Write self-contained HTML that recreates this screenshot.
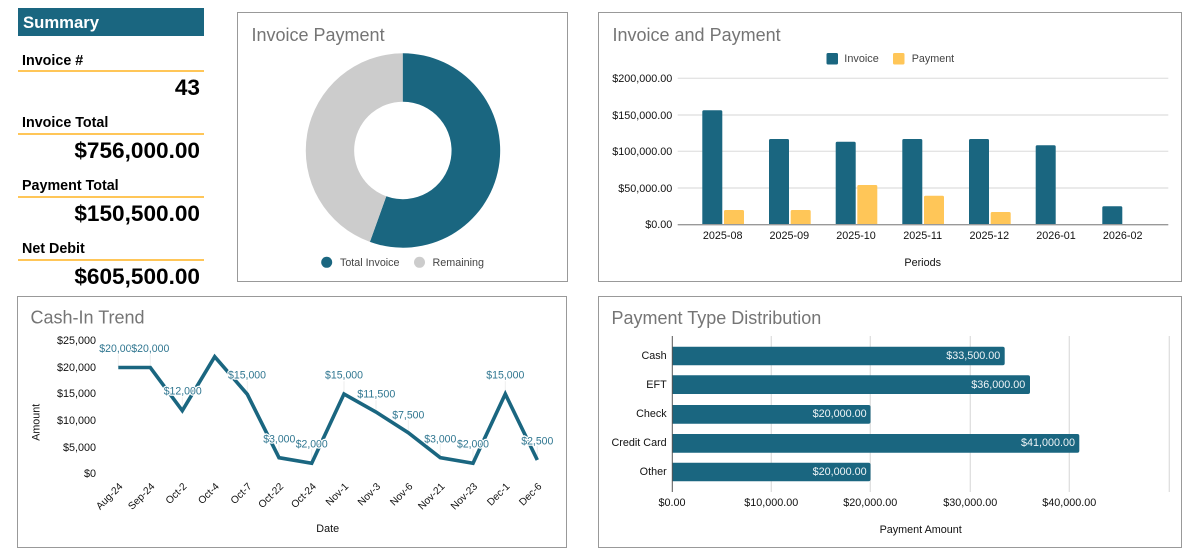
<!DOCTYPE html>
<html><head><meta charset="utf-8"><title>Dashboard</title>
<style>
html,body{margin:0;padding:0;background:#fff;width:1186px;height:551px;overflow:hidden;position:relative}
body,svg{font-family:"Liberation Sans",Arial,sans-serif}
svg{display:block;position:absolute;left:0;top:0}
.t{font-size:18px;fill:#757575}
.s{font-size:10.2px;fill:#111}
.e{text-anchor:end}
.m{text-anchor:middle}
.g{font-size:11px;fill:#444}
.d{font-size:11px;fill:#2f7690;text-anchor:middle;stroke:#fff;stroke-width:2.5px;paint-order:stroke;stroke-linejoin:round}
.card{fill:#fff;stroke:#999;stroke-width:1}
.x{position:absolute;white-space:nowrap;font-size:10.8px;line-height:12px;height:12px;color:#111}
.r{width:200px;text-align:right}
.c{width:200px;text-align:center}
.w{color:#eef4f6;width:200px;text-align:right}
.lb{position:absolute;white-space:nowrap;font-size:14.3px;line-height:16px;font-weight:700;color:#000;left:22px}
.v{position:absolute;white-space:nowrap;font-size:22.6px;line-height:26px;font-weight:700;color:#000;width:190px;left:10px;text-align:right}
.sum{position:absolute;white-space:nowrap;font-size:16.7px;line-height:20px;font-weight:700;color:#fff;left:23px;top:13px}
</style></head><body>
<svg width="1186" height="551" viewBox="0 0 1186 551" xmlns="http://www.w3.org/2000/svg">
<rect x="18" y="8" width="186" height="28" fill="#1a6680"/>
<rect x="18" y="70" width="186" height="2" fill="#ffc658"/>
<rect x="18" y="133" width="186" height="2" fill="#ffc658"/>
<rect x="18" y="196" width="186" height="2" fill="#ffc658"/>
<rect x="18" y="259" width="186" height="2" fill="#ffc658"/>

<!-- Invoice Payment donut -->
<rect class="card" x="237.5" y="12.5" width="330" height="269"/>
<text class="t" x="251.5" y="41">Invoice Payment</text>
<path d="M402.7 53.3A97.2 97.2 0 1 1 369.9 241.9L386.3 196.3A48.7 48.7 0 1 0 402.7 101.8Z" fill="#1a6680"/>
<path d="M402.7 53.3A97.2 97.2 0 0 0 369.9 241.9L386.3 196.3A48.7 48.7 0 0 1 402.7 101.8Z" fill="#cccccc"/>
<circle cx="326.7" cy="262.3" r="5.5" fill="#1a6680"/>
<text class="g" x="340" y="266" textLength="59.5" lengthAdjust="spacingAndGlyphs">Total Invoice</text>
<circle cx="419.5" cy="262.3" r="5.5" fill="#cccccc"/>
<text class="g" x="432.5" y="266" textLength="51.5" lengthAdjust="spacingAndGlyphs">Remaining</text>

<!-- Invoice and Payment -->
<rect class="card" x="598.5" y="12.5" width="583" height="269"/>
<text class="t" x="612.5" y="41">Invoice and Payment</text>
<rect x="826.5" y="53" width="11.5" height="11.5" rx="1.5" fill="#1a6680"/>
<text class="g" x="844.3" y="62" textLength="34.5" lengthAdjust="spacingAndGlyphs">Invoice</text>
<rect x="893" y="53" width="11.5" height="11.5" rx="1.5" fill="#ffc658"/>
<text class="g" x="911.7" y="62" textLength="42.5" lengthAdjust="spacingAndGlyphs">Payment</text>
<g stroke="#e4e4e4" stroke-width="1.4">
<line x1="677.7" x2="1168.3" y1="78.3" y2="78.3"/>
<line x1="677.7" x2="1168.3" y1="115" y2="115"/>
<line x1="677.7" x2="1168.3" y1="151.3" y2="151.3"/>
<line x1="677.7" x2="1168.3" y1="188" y2="188"/>
</g>
<g fill="#1a6680">
<path d="M702.3 224.5V111.8q0-1.5 1.5-1.5h17q1.5 0 1.5 1.5V224.5Z"/>
<path d="M769 224.5V140.5q0-1.5 1.5-1.5h17q1.5 0 1.5 1.5V224.5Z"/>
<path d="M835.7 224.5V143.2q0-1.5 1.5-1.5h17q1.5 0 1.5 1.5V224.5Z"/>
<path d="M902.3 224.5V140.5q0-1.5 1.5-1.5h17q1.5 0 1.5 1.5V224.5Z"/>
<path d="M969 224.5V140.5q0-1.5 1.5-1.5h17q1.5 0 1.5 1.5V224.5Z"/>
<path d="M1035.7 224.5V146.8q0-1.5 1.5-1.5h17q1.5 0 1.5 1.5V224.5Z"/>
<path d="M1102.3 224.5V207.8q0-1.5 1.5-1.5h17q1.5 0 1.5 1.5V224.5Z"/>
</g>
<g fill="#ffc658">
<path d="M724 224.5V211.5q0-1.5 1.5-1.5h17q1.5 0 1.5 1.5V224.5Z"/>
<path d="M790.7 224.5V211.5q0-1.5 1.5-1.5h17q1.5 0 1.5 1.5V224.5Z"/>
<path d="M857.3 224.5V186.5q0-1.5 1.5-1.5h17q1.5 0 1.5 1.5V224.5Z"/>
<path d="M924 224.5V197.2q0-1.5 1.5-1.5h17q1.5 0 1.5 1.5V224.5Z"/>
<path d="M990.7 224.5V213.5q0-1.5 1.5-1.5h17q1.5 0 1.5 1.5V224.5Z"/>
</g>
<line x1="677.7" x2="1168.3" y1="224.7" y2="224.7" stroke="#999" stroke-width="1.4"/>

<!-- Cash-In Trend -->
<rect class="card" x="17.5" y="296.5" width="549" height="251"/>
<text class="t" x="30.5" y="323.5">Cash-In Trend</text>
<text class="s m" style="font-size:11px" transform="translate(39.5 422.3) rotate(-90)" textLength="37" lengthAdjust="spacingAndGlyphs">Amount</text>
<g stroke="#eeeeee" stroke-width="1">
<line x1="118.3" x2="118.3" y1="354" y2="367"/><line x1="150.3" x2="150.3" y1="354" y2="367"/>
<line x1="182.3" x2="182.3" y1="396" y2="410"/><line x1="247.3" x2="247.3" y1="380" y2="394"/>
<line x1="279" x2="279" y1="444" y2="457"/><line x1="311.7" x2="311.7" y1="449" y2="463"/>
<line x1="344" x2="344" y1="380" y2="394"/><line x1="376" x2="376" y1="399" y2="412"/>
<line x1="408.3" x2="408.3" y1="420" y2="432"/><line x1="440.3" x2="440.3" y1="444" y2="457"/>
<line x1="473" x2="473" y1="449" y2="463"/><line x1="505.3" x2="505.3" y1="380" y2="394"/>
<line x1="537.3" x2="537.3" y1="446" y2="460"/>
</g>
<polyline fill="none" stroke="#1a6680" stroke-width="3.6" stroke-linejoin="miter" points="118.3,367.5 150.3,367.5 182.3,410.7 214.7,356.7 247.3,394.3 279,457.7 311.7,463.3 344,394 376,412 408.3,432.7 440.3,457.7 473,463.3 505.3,394 537.3,460"/>
<text class="d" x="118.3" y="352" textLength="38" lengthAdjust="spacingAndGlyphs">$20,000</text>
<text class="d" x="150.3" y="352" textLength="38" lengthAdjust="spacingAndGlyphs">$20,000</text>
<text class="d" x="182.7" y="394.3" textLength="38" lengthAdjust="spacingAndGlyphs">$12,000</text>
<text class="d" x="247" y="378.3" textLength="38" lengthAdjust="spacingAndGlyphs">$15,000</text>
<text class="d" x="279.3" y="442.3" textLength="32" lengthAdjust="spacingAndGlyphs">$3,000</text>
<text class="d" x="311.7" y="447.3" textLength="32" lengthAdjust="spacingAndGlyphs">$2,000</text>
<text class="d" x="344" y="378.3" textLength="38" lengthAdjust="spacingAndGlyphs">$15,000</text>
<text class="d" x="376.3" y="397.3" textLength="38" lengthAdjust="spacingAndGlyphs">$11,500</text>
<text class="d" x="408.3" y="418.3" textLength="32" lengthAdjust="spacingAndGlyphs">$7,500</text>
<text class="d" x="440.3" y="442.3" textLength="32" lengthAdjust="spacingAndGlyphs">$3,000</text>
<text class="d" x="473" y="447.3" textLength="32" lengthAdjust="spacingAndGlyphs">$2,000</text>
<text class="d" x="505.3" y="378.3" textLength="38" lengthAdjust="spacingAndGlyphs">$15,000</text>
<text class="d" x="537.3" y="444.3" textLength="32" lengthAdjust="spacingAndGlyphs">$2,500</text>
<text class="s e" transform="translate(123.3 487) rotate(-45)">Aug-24</text>
<text class="s e" transform="translate(155.3 487) rotate(-45)">Sep-24</text>
<text class="s e" transform="translate(187.3 487) rotate(-45)">Oct-2</text>
<text class="s e" transform="translate(219.7 487) rotate(-45)">Oct-4</text>
<text class="s e" transform="translate(252.3 487) rotate(-45)">Oct-7</text>
<text class="s e" transform="translate(284 487) rotate(-45)">Oct-22</text>
<text class="s e" transform="translate(316.7 487) rotate(-45)">Oct-24</text>
<text class="s e" transform="translate(349 487) rotate(-45)">Nov-1</text>
<text class="s e" transform="translate(381 487) rotate(-45)">Nov-3</text>
<text class="s e" transform="translate(413.3 487) rotate(-45)">Nov-6</text>
<text class="s e" transform="translate(445.3 487) rotate(-45)">Nov-21</text>
<text class="s e" transform="translate(478 487) rotate(-45)">Nov-23</text>
<text class="s e" transform="translate(510.3 487) rotate(-45)">Dec-1</text>
<text class="s e" transform="translate(542.3 487) rotate(-45)">Dec-6</text>

<!-- Payment Type Distribution -->
<rect class="card" x="598.5" y="296.5" width="583" height="251"/>
<text class="t" x="611.5" y="324">Payment Type Distribution</text>
<g stroke="#dddddd" stroke-width="1.2">
<line x1="771.3" x2="771.3" y1="336" y2="492"/>
<line x1="870.3" x2="870.3" y1="336" y2="492"/>
<line x1="970.3" x2="970.3" y1="336" y2="492"/>
<line x1="1069.3" x2="1069.3" y1="336" y2="492"/>
<line x1="1169.3" x2="1169.3" y1="336" y2="492"/>
</g>
<g fill="#1a6680">
<path d="M672.5 346.7H1002.7q2 0 2 2V363.3q0 2-2 2H672.5Z"/>
<path d="M672.5 375.3H1028q2 0 2 2V392q0 2-2 2H672.5Z"/>
<path d="M672.5 405H868.5q2 0 2 2V421.7q0 2-2 2H672.5Z"/>
<path d="M672.5 434H1077.3q2 0 2 2V450.7q0 2-2 2H672.5Z"/>
<path d="M672.5 462.7H868.5q2 0 2 2V479.3q0 2-2 2H672.5Z"/>
</g>
<line x1="672.3" x2="672.3" y1="336" y2="492" stroke="#555" stroke-width="1"/>
</svg>

<!-- Summary text -->
<div class="sum">Summary</div>
<div class="lb" style="top:53px">Invoice #</div>
<div class="v" style="top:75px">43</div>
<div class="lb" style="top:115px">Invoice Total</div>
<div class="v" style="top:138px">$756,000.00</div>
<div class="lb" style="top:178px">Payment Total</div>
<div class="v" style="top:201px">$150,500.00</div>
<div class="lb" style="top:241px">Net Debit</div>
<div class="v" style="top:264px">$605,500.00</div>

<!-- Invoice and Payment axes -->
<div class="x r" style="left:472.3px;top:73px">$200,000.00</div>
<div class="x r" style="left:472.3px;top:110px">$150,000.00</div>
<div class="x r" style="left:472.3px;top:146px">$100,000.00</div>
<div class="x r" style="left:472.3px;top:183px">$50,000.00</div>
<div class="x r" style="left:472.3px;top:219px">$0.00</div>
<div class="x c" style="left:622.7px;top:230px">2025-08</div>
<div class="x c" style="left:689.3px;top:230px">2025-09</div>
<div class="x c" style="left:756px;top:230px">2025-10</div>
<div class="x c" style="left:822.7px;top:230px">2025-11</div>
<div class="x c" style="left:889.3px;top:230px">2025-12</div>
<div class="x c" style="left:956px;top:230px">2026-01</div>
<div class="x c" style="left:1022.7px;top:230px">2026-02</div>
<div class="x c" style="left:822.7px;top:257px">Periods</div>

<!-- Cash-In axes -->
<div class="x r" style="left:-104px;top:335px">$25,000</div>
<div class="x r" style="left:-104px;top:362px">$20,000</div>
<div class="x r" style="left:-104px;top:388px">$15,000</div>
<div class="x r" style="left:-104px;top:415px">$10,000</div>
<div class="x r" style="left:-104px;top:442px">$5,000</div>
<div class="x r" style="left:-104px;top:468px">$0</div>
<div class="x c" style="left:227.7px;top:523px">Date</div>

<!-- Payment Type labels -->
<div class="x w" style="left:800.3px;top:350px">$33,500.00</div>
<div class="x w" style="left:825.3px;top:379px">$36,000.00</div>
<div class="x w" style="left:666.7px;top:408px">$20,000.00</div>
<div class="x w" style="left:875px;top:437px">$41,000.00</div>
<div class="x w" style="left:666.7px;top:466px">$20,000.00</div>
<div class="x r" style="left:466.7px;top:350px">Cash</div>
<div class="x r" style="left:466.7px;top:379px">EFT</div>
<div class="x r" style="left:466.7px;top:408px">Check</div>
<div class="x r" style="left:466.7px;top:437px">Credit Card</div>
<div class="x r" style="left:466.7px;top:466px">Other</div>
<div class="x c" style="left:572px;top:497px">$0.00</div>
<div class="x c" style="left:671.3px;top:497px">$10,000.00</div>
<div class="x c" style="left:770.3px;top:497px">$20,000.00</div>
<div class="x c" style="left:870.3px;top:497px">$30,000.00</div>
<div class="x c" style="left:969.3px;top:497px">$40,000.00</div>
<div class="x c" style="left:820.7px;top:524px">Payment Amount</div>
</body></html>
